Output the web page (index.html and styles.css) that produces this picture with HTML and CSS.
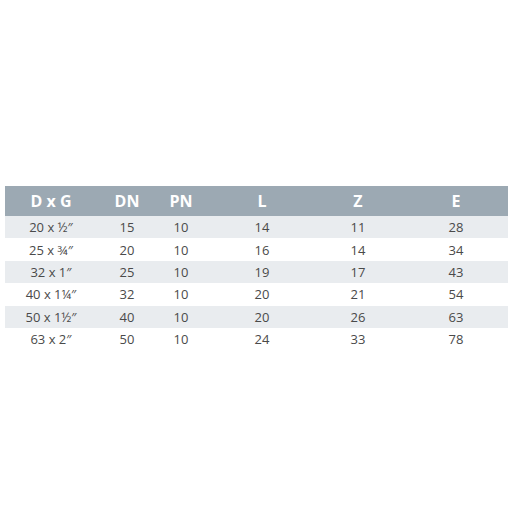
FILE: index.html
```html
<!DOCTYPE html>
<html>
<head>
<meta charset="utf-8">
<link rel="stylesheet" href="styles.css">
</head>
<body>
<div class="page">
  <div class="table">
    <div class="row head">
      <div>D x G</div><div>DN</div><div>PN</div><div>L</div><div>Z</div><div class="last">E</div>
    </div>
    <div class="row shade">
      <div>20 x ½″</div><div>15</div><div>10</div><div>14</div><div>11</div><div class="last">28</div>
    </div>
    <div class="row">
      <div>25 x ¾″</div><div>20</div><div>10</div><div>16</div><div>14</div><div class="last">34</div>
    </div>
    <div class="row shade">
      <div>32 x 1″</div><div>25</div><div>10</div><div>19</div><div>17</div><div class="last">43</div>
    </div>
    <div class="row">
      <div>40 x 1¼″</div><div>32</div><div>10</div><div>20</div><div>21</div><div class="last">54</div>
    </div>
    <div class="row shade">
      <div>50 x 1½″</div><div>40</div><div>10</div><div>20</div><div>26</div><div class="last">63</div>
    </div>
    <div class="row">
      <div>63 x 2″</div><div>50</div><div>10</div><div>24</div><div>33</div><div class="last">78</div>
    </div>
  </div>
</div>
</body>
</html>
```
FILE: styles.css
```css
html, body {
  margin: 0;
  padding: 0;
  background: #ffffff;
}
.page {
  width: 512px;
  height: 512px;
  padding-top: 186px;
  padding-left: 5px;
  box-sizing: border-box;
  font-family: "Open Sans", "Liberation Sans", sans-serif;
}
.table {
  width: 503px;
}
.row {
  display: grid;
  grid-template-columns: 92px 60px 48px 114px 78px 111px;
  height: 22.4px;
  align-items: center;
  font-size: 13px;
  color: #4a4a4a;
}
.row > div {
  text-align: center;
}
.row > .last {
  padding-left: 7px;
}
.row.head {
  height: 30px;
  background: #9ca9b3;
  color: #ffffff;
  font-weight: 700;
  font-size: 16px;
}
.row.shade {
  background: #e9ecef;
}
```
